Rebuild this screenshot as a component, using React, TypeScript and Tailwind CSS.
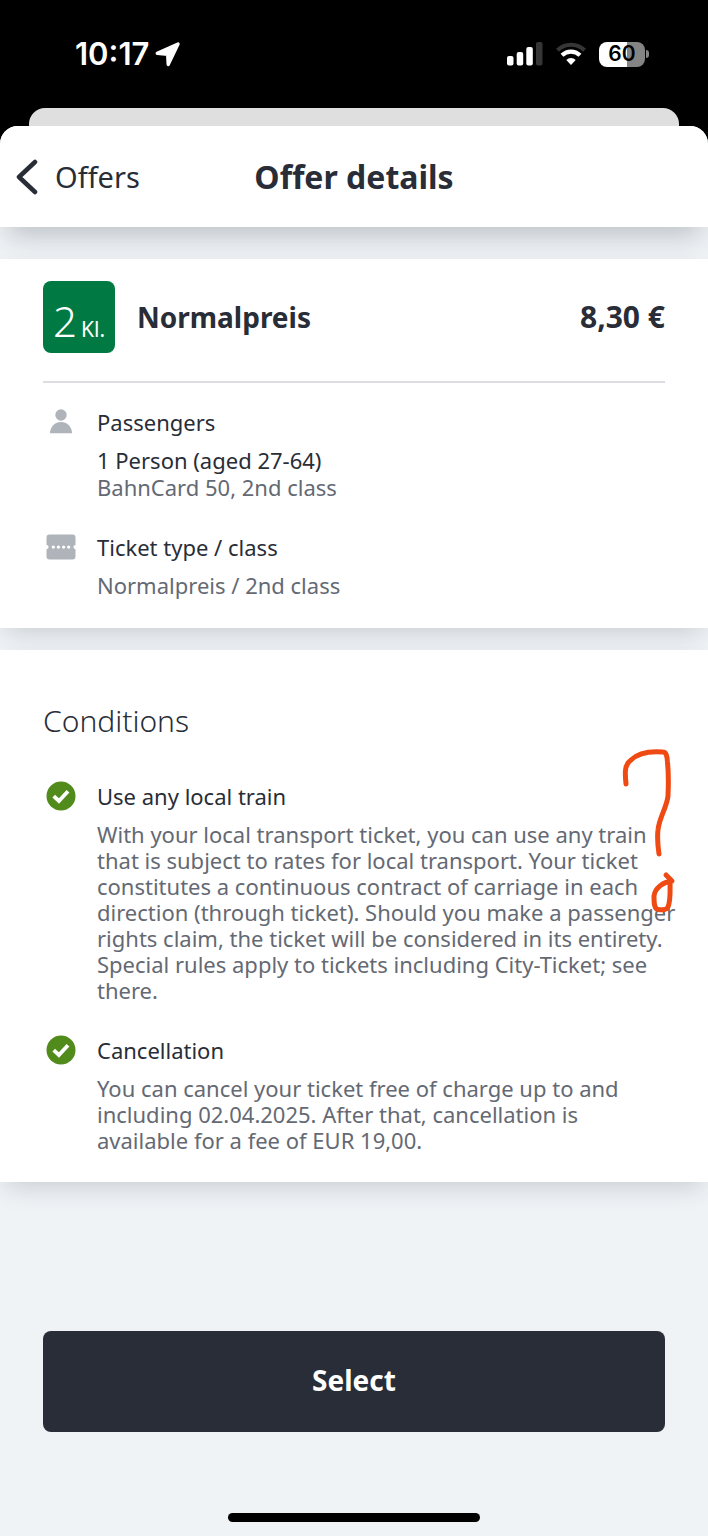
import React from "react";

interface DetailProps {
  icon: React.ReactNode;
  title: string;
  children: React.ReactNode;
}

const PersonIcon = () => (
  <svg width="30" height="26" viewBox="0 0 30 26" fill="#afb4bb" aria-hidden="true">
    <circle cx="15" cy="6" r="5.7" />
    <path d="M4 24.3A11 11.300 0 0 1 26 24.300Z" />
  </svg>
);

const TicketIcon = () => (
  <svg width="30" height="26" viewBox="0 0 30 26" aria-hidden="true">
    <path
      d="M3.5 .5H26.5A3 3 0 0 1 29.5 3.5V11A2.1 2.1 0 0 0 29.5 15.200V22.500A3 3 0 0 1 26.500 25.500H3.500A3 3 0 0 1 .5 22.500V15.200A2.100 2.100 0 0 0 .5 11V3.500A3 3 0 0 1 3.500 .5Z"
      fill="#afb4bb"
    />
    <g fill="#fff">
      <circle cx="7.300" cy="13.100" r="1.700" />
      <circle cx="12.400" cy="13.100" r="1.700" />
      <circle cx="17.600" cy="13.100" r="1.700" />
      <circle cx="22.700" cy="13.100" r="1.700" />
    </g>
  </svg>
);

const CheckIcon = () => (
  <svg width="30" height="30" viewBox="0 0 30 30" aria-hidden="true">
    <circle cx="15" cy="15" r="14.5" fill="#508b1b" />
    <path d="M7.700 15.100L12.900 20L22 10.200" fill="none" stroke="#fff" strokeWidth="3.800" />
  </svg>
);

const Detail = ({ icon, title, children }: DetailProps) => (
  <div className="grid grid-cols-[36px_1fr] gap-x-[18px] gap-y-3">
    <div className="flex h-[26px] items-center justify-center">{icon}</div>
    <h3 className="text-[#282d37]">{title}</h3>
    <div className="col-start-2 text-[#646973]">{children}</div>
  </div>
);

const StatusBar = () => (
  <div className="flex h-[108px] items-center justify-between pr-[59px] pl-[75px] font-['Inter',sans-serif] text-white">
    <div className="flex items-center gap-[6px]">
      <span className="text-[31px] font-semibold">10:17</span>
      <svg width="25" height="25" viewBox="0 0 25 25" aria-hidden="true">
        <path
          d="M2.300 11.400L23 2L13.200 22.500L12.700 12.300Z"
          fill="#fff"
          stroke="#fff"
          strokeWidth="3.400"
          strokeLinejoin="round"
        />
      </svg>
    </div>
    <div className="flex items-center">
      <svg width="36" height="24" viewBox="0 0 36 24" fill="#fff" aria-hidden="true">
        <rect x="0" y="14" width="6.500" height="9.500" rx="2" />
        <rect x="9.700" y="10" width="6.500" height="13.500" rx="2" />
        <rect x="19.300" y="5" width="6.500" height="18.500" rx="2" />
        <rect x="29" y="0" width="6.500" height="23.500" rx="2" fill="#363636" />
      </svg>
      <svg className="ml-[13px]" width="30" height="24" viewBox="0 0 30 24" aria-hidden="true">
        <path d="M1.500 8.200C9 .9 21 .9 28.500 8.200" fill="none" stroke="#363636" strokeWidth="4.200" />
        <path d="M6 13.300C11.200 8.400 18.800 8.400 24 13.300" fill="none" stroke="#fff" strokeWidth="4.200" />
        <path d="M10.300 18C13 15.300 17 15.300 19.700 18L15 23Z" fill="#fff" />
      </svg>
      <div className="ml-[13px] flex h-[25px] w-[46px] items-center justify-center rounded-lg bg-linear-to-r from-white from-60% to-[#848484] to-60% text-[21px] font-semibold text-black">
        60
      </div>
      <div className="ml-px h-2 w-[3px] rounded-r-full bg-[#848484]" />
    </div>
  </div>
);

const Scribble = () => (
  <svg
    className="pointer-events-none absolute top-[90px] right-[23px]"
    width="70"
    height="180"
    viewBox="0 0 70 180"
    fill="none"
    stroke="#f04a14"
    strokeWidth="5"
    strokeLinecap="round"
    strokeLinejoin="round"
    aria-hidden="true"
  >
    <path d="M11 44C10 34 9 25 16 20C24 12 36 11 48 12C51 12 52 15 52.500 22C53.500 32 53.500 45 53 56C52 67 44 78 43 90C42 98 43 107 44 114" />
    <path d="M51 135L57 141C48 142 40 148 39 156C39 162 39 169 43 169.500C47 170 52 170 53 167C56 160 55 150 55 139" />
  </svg>
);

export default function App() {
  return (
    <div className="flex min-h-screen flex-col bg-black font-['Noto_Sans',sans-serif] text-[22px] leading-[26px] text-[#282d37]">
      <StatusBar />
      <div className="mx-[29px] h-[18px] rounded-t-2xl bg-[#dfdfdf]" />

      <div className="flex flex-1 flex-col overflow-hidden rounded-t-[18px] bg-[#eff3f6]">
        <header className="grid h-[101px] grid-cols-[1fr_auto_1fr] items-center bg-white px-4 shadow-[0_16px_26px_-8px_rgba(40,45,55,0.26)]">
          <button type="button" className="flex items-center gap-[17px] text-[29px] leading-10">
            <svg width="22" height="36" viewBox="0 0 22 36" fill="none" aria-hidden="true">
              <path d="M19 3L3 18L19 33" stroke="#282d37" strokeWidth="4.500" strokeLinecap="round" strokeLinejoin="round" />
            </svg>
            Offers
          </button>
          <h1 className="text-[32px] leading-10 font-bold">Offer details</h1>
        </header>

        <main className="flex flex-1 flex-col">
          <section className="mt-8 bg-white px-[43px] pt-[22px] pb-[30px] shadow-[0_10px_24px_-6px_rgba(40,45,55,0.2)]">
            <div className="flex items-center border-b-2 border-[#dcdde2] pb-7">
              <div className="flex size-[72px] items-baseline justify-center gap-1 rounded-lg bg-[#007a42] pt-[22px] text-white">
                <span className="text-[42px] leading-9 font-light">2</span>
                <span className="text-[21px] leading-7">Kl.</span>
              </div>
              <h2 className="ml-[22px] flex-1 text-[28px] leading-10 font-bold">Normalpreis</h2>
              <span className="text-[30px] leading-10 font-bold">8,30 €</span>
            </div>
            <div className="mt-[26px] flex flex-col gap-[34px]">
              <Detail icon={<PersonIcon />} title="Passengers">
                <p className="leading-[27px] text-[#282d37]">1 Person (aged 27-64)</p>
                <p>BahnCard 50, 2nd class</p>
              </Detail>
              <Detail icon={<TicketIcon />} title="Ticket type / class">
                <p>Normalpreis / 2nd class</p>
              </Detail>
            </div>
          </section>

          <section className="relative mt-[22px] bg-white px-[43px] pt-[51px] pb-[29px] shadow-[0_10px_24px_-6px_rgba(40,45,55,0.2)]">
            <h2 className="text-[30px] leading-10 font-light">Conditions</h2>
            <div className="mt-[42px] flex flex-col gap-[34px]">
              <Detail icon={<CheckIcon />} title="Use any local train">
                <p className="-mr-3">
                  With your local transport ticket, you can use any train that is subject to rates for local
                  transport. Your ticket constitutes a continuous contract of carriage in each direction
                  (through ticket). Should you make a passenger rights claim, the ticket will be considered in
                  its entirety. Special rules apply to tickets including City-Ticket; see there.
                </p>
              </Detail>
              <Detail icon={<CheckIcon />} title="Cancellation">
                <p>
                  You can cancel your ticket free of charge up to and including 02.04.2025. After that,
                  cancellation is available for a fee of EUR 19,00.
                </p>
              </Detail>
            </div>
            <Scribble />
          </section>

          <div className="mt-auto px-[43px] pt-10">
            <button
              type="button"
              className="h-[101px] w-full rounded-lg bg-[#282d37] pb-1 text-[28px] font-bold text-white"
            >
              Select
            </button>
          </div>
          <div className="mx-auto mt-[81px] mb-[14px] h-[9px] w-[252px] rounded-full bg-black" />
        </main>
      </div>
    </div>
  );
}
